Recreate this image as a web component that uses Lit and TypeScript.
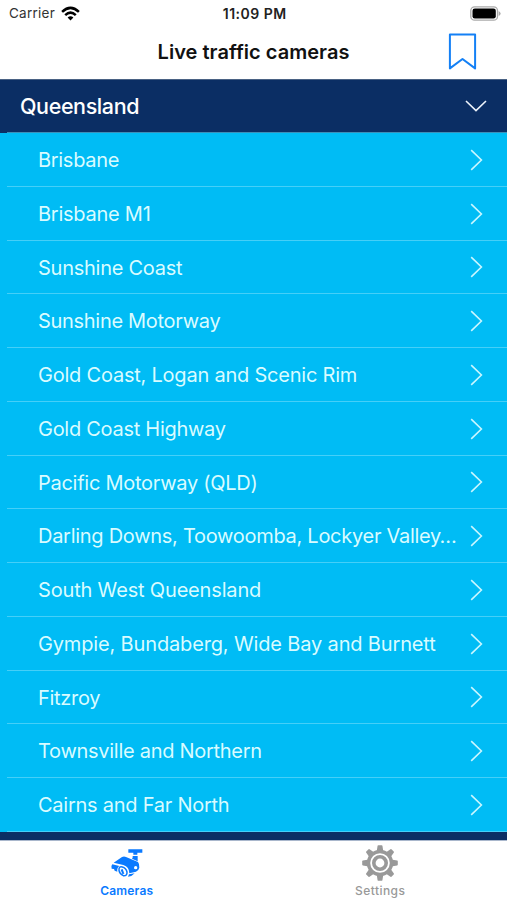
import { LitElement, html, svg, css } from "lit";
import { customElement } from "lit/decorators.js";
import { styleMap } from "lit/directives/style-map.js";

interface Region {
  name: string;
  tracking: number;
}

const regions: Region[] = [
  { name: "Brisbane", tracking: -0.3 },
  { name: "Brisbane M1", tracking: -0.25 },
  { name: "Sunshine Coast", tracking: -0.26 },
  { name: "Sunshine Motorway", tracking: -0.3 },
  { name: "Gold Coast, Logan and Scenic Rim", tracking: -0.22 },
  { name: "Gold Coast Highway", tracking: -0.28 },
  { name: "Pacific Motorway (QLD)", tracking: -0.27 },
  { name: "Darling Downs, Toowoomba, Lockyer Valley…", tracking: -0.28 },
  { name: "South West Queensland", tracking: -0.17 },
  { name: "Gympie, Bundaberg, Wide Bay and Burnett", tracking: -0.15 },
  { name: "Fitzroy", tracking: -0.3 },
  { name: "Townsville and Northern", tracking: -0.28 },
  { name: "Cairns and Far North", tracking: -0.25 },
];

const teeth = [0, 45, 90, 135, 180, 225, 270, 315];

@customElement("app-root")
export class AppRoot extends LitElement {
  static styles = css`
    :host {
      display: flex;
      flex-direction: column;
      width: 507px;
      height: 900px;
      overflow: hidden;
      background: #fff;
      color: #111;
      font-family: Inter, "Liberation Sans", sans-serif;
    }
    svg { display: block; flex: none; }
    .status {
      display: grid;
      grid-template-columns: 1fr auto 1fr;
      align-items: center;
      height: 26px;
      box-sizing: border-box;
      padding: 0 6.5px 0 9px;
      font-size: 13.5px;
      white-space: nowrap;
    }
    .carrier { display: flex; align-items: center; gap: 6px; color: #333; letter-spacing: 0.25px; }
    .time { font-weight: 600; font-size: 14px; letter-spacing: 0.5px; color: #222; }
    .battery { justify-self: end; }
    .nav {
      display: grid;
      grid-template-columns: 1fr auto 1fr;
      align-items: center;
      height: 52.5px;
      padding: 0 29px;
    }
    .title { margin: 0; font-size: 20px; line-height: 24px; font-weight: 600; letter-spacing: 0.03px; }
    .mark { justify-self: end; margin-right: 1px; }
    .list { flex: 1; min-height: 0; overflow: hidden; background: #0b2e64; }
    .section {
      display: flex;
      align-items: center;
      justify-content: space-between;
      box-sizing: border-box;
      height: 54.5px;
      padding: 0 20px;
      border-top: 1px solid #4a6284;
      color: #fff;
      font-size: 21.5px;
      font-weight: 500;
      letter-spacing: -0.4px;
      background: linear-gradient(#3d8fb8, #3d8fb8) 7px 100% / 100% 1px no-repeat;
    }
    .row {
      display: flex;
      align-items: center;
      justify-content: space-between;
      box-sizing: border-box;
      height: 53.75px;
      padding: 0 24px 0 38px;
      background: linear-gradient(#45cff8, #45cff8) 7px 100% / 100% 1px no-repeat #00bcf5;
      color: #d9fbff;
      font-size: 20px;
      line-height: 26px;
    }
    .label { white-space: nowrap; padding-top: 0.7px; }
    .tabs {
      display: grid;
      grid-template-columns: 1fr 1fr;
      height: 60.5px;
      box-sizing: border-box;
      border-top: 1px solid #a9b7cc;
    }
    .tab {
      display: flex;
      flex-direction: column;
      align-items: center;
      padding-top: 4.5px;
      color: #999;
      font-size: 12px;
      line-height: 15px;
      font-weight: 500;
      letter-spacing: 0.45px;
    }
    .tab svg { margin-bottom: 2px; }
    .active { color: #0a7aff; font-weight: 600; letter-spacing: 0.2px; }
  `;

  render() {
    return html`
      <div class="status">
        <span class="carrier">Carrier
          <svg width="19" height="15" viewBox="0 0 19 15" fill="none" stroke="#000" stroke-width="2.5">
            <path d="M1.1 5.8Q9.5 -2.1 17.9 5.8M4.2 9.1Q9.5 4.2 14.8 9.1" />
            <path d="M6.6 11.5Q9.5 8.9 12.4 11.5L9.5 14.4Z" fill="#000" stroke="none" />
          </svg>
        </span>
        <span class="time">11:09 PM</span>
        <svg class="battery" width="31" height="15" viewBox="0 0 31 15">
          <rect x=".8" y=".8" width="26.7" height="13.4" rx="3.8" fill="#fff" stroke="#aaa" stroke-width="1.3" />
          <rect x="2.5" y="2.5" width="23.3" height="10" rx="2.3" fill="#000" />
          <path d="M28.6 5Q30.6 6 30.6 7.5T28.6 10Z" fill="#aaa" />
        </svg>
      </div>
      <div class="nav">
        <span></span>
        <h1 class="title">Live traffic cameras</h1>
        <svg class="mark" width="29" height="38" viewBox="0 0 29 38" fill="none" stroke="#1480f5" stroke-width="2" stroke-linejoin="round">
          <path d="M1.9 1.6H27.1V35.4L14.5 26L1.9 35.4Z" />
        </svg>
      </div>
      <div class="list">
        <div class="section">
          <span>Queensland</span>
          <svg width="22" height="12" viewBox="0 0 22 12" fill="none" stroke="#edf3fb" stroke-width="1.6">
            <path d="M1 1L11 10.6L21 1" />
          </svg>
        </div>
        ${regions.map(
          ({ name, tracking }) => html`<div class="row">
            <span class="label" style=${styleMap({ letterSpacing: `${tracking}px` })}>${name}</span>
            <svg width="13" height="22" viewBox="0 0 13 22" fill="none" stroke="#c9f6ff" stroke-width="1.6">
              <path d="M1.2 1.2L11.4 11L1.2 20.8" />
            </svg>
          </div>`
        )}
      </div>
      <div class="tabs">
        <div class="tab active">
          <svg width="38" height="36" viewBox="0 0 114 108" fill="currentColor">
            <path d="M61 13H103V23H88V29H76V23H61Z" />
            <path d="M74 33H89V49L72 41Q75 38 74 33Z" />
            <path d="M17 53L42 36Q48 33 54 36L90 51Q95 57 94 68Q92 77 84 80L64 85Q64 66 46 60Z" />
            <circle cx="83" cy="68" r="5" fill="#fff" />
            <path d="M13 58L34 63Q26 69 28 80L20 77L18 72L11 71Q7 65 13 58Z" />
            <path d="M43 66Q32 63 33 76Q35 87 46 92Q58 93 57 81Q54 69 43 66Z" fill="none" stroke="currentColor" stroke-width="4.5" />
            <path d="M38 74L44 72L49 86L43 87Z" />
            <path d="M63 88L80 85L70 93L60 95Z" />
          </svg>
          <span>Cameras</span>
        </div>
        <div class="tab">
          <svg width="38" height="36" viewBox="-19 -18 38 36" fill="#999">
            ${teeth.map((a) => svg`<path d="M-3.4 -11L-2.4 -17.2Q-2.3 -17.8 -1.6 -17.8H1.6Q2.3 -17.8 2.4 -17.2L3.4 -11Z" transform="rotate(${a})" />`)}
            <circle r="11.5" fill="none" stroke="#999" stroke-width="3.4" />
            <circle r="6.2" fill="none" stroke="#999" stroke-width="3.6" />
          </svg>
          <span>Settings</span>
        </div>
      </div>
    `;
  }
}
